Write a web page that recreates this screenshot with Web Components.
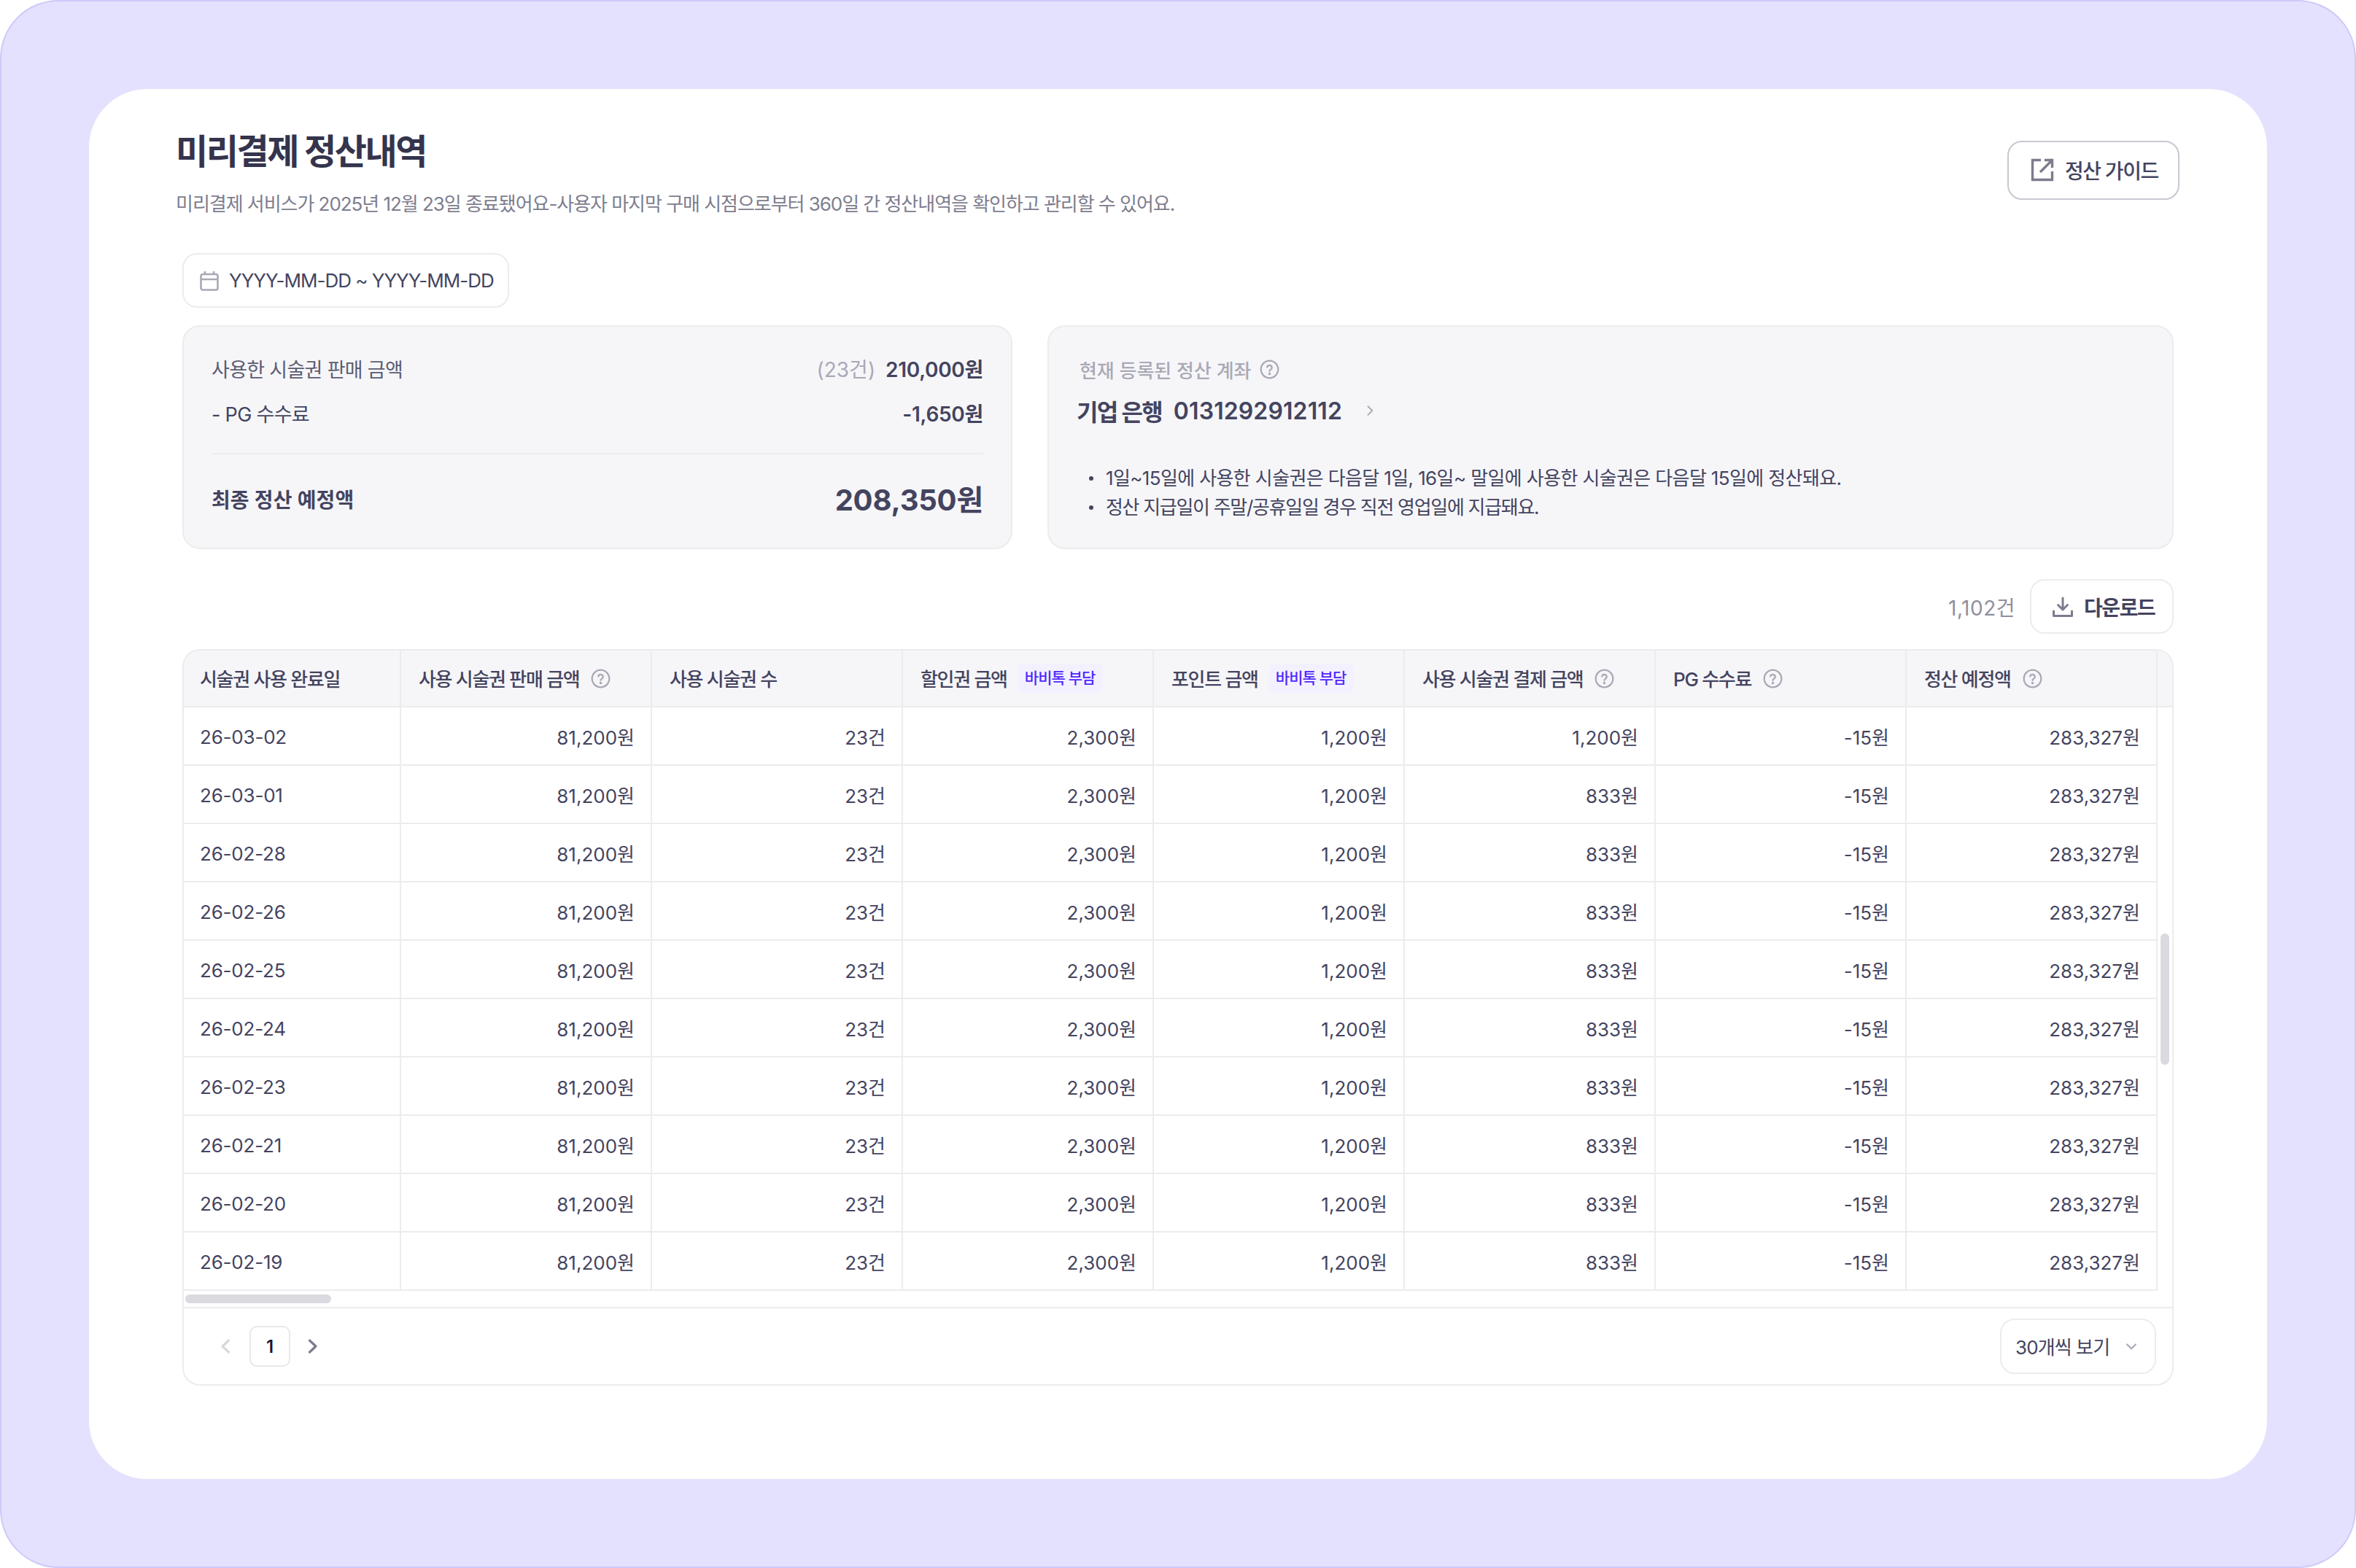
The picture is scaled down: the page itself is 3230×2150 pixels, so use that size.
<!doctype html>
<html lang="ko"><head><meta charset="utf-8"><title>미리결제 정산내역</title>
<style>
html,body{margin:0;padding:0;background:#fff}
body{width:3230px;height:2150px;overflow:hidden;font-family:Inter,"Noto Sans CJK KR","Noto Sans",sans-serif;color:#44445f}
</style></head><body>
<settlement-page>
  <page-head slot="head" title-text="미리결제 정산내역" desc="미리결제 서비스가 2025년 12월 23일 종료됐어요-사용자 마지막 구매 시점으로부터 360일 간 정산내역을 확인하고 관리할 수 있어요."></page-head>
  <date-range slot="date" value="YYYY-MM-DD ~ YYYY-MM-DD"></date-range>
  <sum-panel slot="sum"></sum-panel>
  <account-panel slot="account"></account-panel>
  <table-tools slot="tools" count="1,102건"></table-tools>
  <settle-table slot="table"></settle-table>
</settlement-page>
<script>
const ICON={
 help:(s=24,c='#a9a9b6')=>`<svg width="${s}" height="${s}" viewBox="0 0 24 24" fill="none" stroke="${c}" stroke-width="2" stroke-linecap="round" stroke-linejoin="round"><circle cx="12" cy="12" r="10.500"/><path d="M9 9.300a3 3 0 0 1 5.900.7c0 2-2.900 2.300-2.900 4.200"/><circle cx="12" cy="17.400" r=".6" fill="${c}"/></svg>`,
 chev:(dir,s,c,w)=>{const p={r:'M9 5l7 7-7 7',l:'M15 5l-7 7 7 7',d:'M5 9l7 7 7-7',pl:'M16.500 4L8 12l8.500 8',pr:'M7.500 4L16 12l-8.500 8'}[dir];return `<svg width="${s}" height="${s}" viewBox="0 0 24 24" fill="none" stroke="${c}" stroke-width="${w}" stroke-linecap="round" stroke-linejoin="round"><path d="${p}"/></svg>`}
};
function def(name,css,html,init){
 customElements.define(name,class extends HTMLElement{
  connectedCallback(){ if(this.shadowRoot)return; const r=this.attachShadow({mode:'open'}); r.innerHTML=`<style>${css}</style>`+(typeof html==='function'?html(this):html); if(init)init(this,r);}
 });
}
def('settlement-page',`
 :host{display:block;width:3230px;height:2150px;box-sizing:border-box;background:#e4e1fe;border:2px solid #cdc9f9;border-radius:80px;padding:120px}
 .card{box-sizing:border-box;width:100%;height:1906px;background:#fff;border-radius:80px;padding:50px 120px 0 122px}
 .date{margin-left:6px}
 .panels{display:grid;grid-template-columns:1138px 1544px;gap:48px;margin:24px 0 0 6px;height:307px}
 .tools{margin:41px 0 0 6px;width:2730px}
 .tbl{margin:21px 0 0 6px}
`,`<div class="card"><slot name="head"></slot>
 <div class="date"><slot name="date"></slot></div>
 <div class="panels"><slot name="sum"></slot><slot name="account"></slot></div>
 <div class="tools"><slot name="tools"></slot></div>
 <div class="tbl"><slot name="table"></slot></div></div>`);
def('page-head',`
 :host{display:flex;justify-content:space-between;align-items:flex-start;height:175px;margin-left:-3px}
 h1{margin:1px 0 0;font-size:48px;line-height:70px;font-weight:700;color:#35344d;letter-spacing:-2.400px}
 p{margin:19px 0 0;font-size:26px;line-height:36px;color:#7d7d8e;letter-spacing:-1.040px;font-weight:400}
 .btn{box-sizing:border-box;display:flex;align-items:center;gap:15px;width:236px;height:81px;margin:21px 0 0 0;padding:0 0 2px 30px;border:2px solid #c9c8d1;border-radius:20px;background:#fff;font-size:28px;font-weight:500;color:#44445f;letter-spacing:-1.400px}
`,h=>`<div><h1>${h.getAttribute('title-text')}</h1><p>${h.getAttribute('desc')}</p></div>
 <div class="btn"><svg width="32" height="32" viewBox="0 0 32 32" fill="none" stroke="#7c7c8d" stroke-width="3.400"><path d="M14 2.500H2.500v27h27V18" /><path d="M19 2.500h10.500V13M29 3L13 19"/></svg><span>정산 가이드</span></div>`);
def('date-range',`
 :host{display:inline-flex;box-sizing:border-box;align-items:center;gap:14px;height:75px;width:448px;padding-left:22px;border:2px solid #ececee;border-radius:20px;background:#fff;font-size:26px;color:#44445f;letter-spacing:-1px}
`,h=>`<svg width="26" height="28" viewBox="0 0 26 28" fill="none" stroke="#a9a9b6" stroke-width="2.600" stroke-linejoin="round"><rect x="1.500" y="5" width="23" height="21.500" rx="2.500"/><path d="M1.500 12h23M7 1v5M19 1v5"/></svg><span>${h.getAttribute('value')}</span>`);
def('sum-panel',`
 :host{display:block;box-sizing:border-box;height:307px;background:#f6f6f9;border:2px solid #ececee;border-radius:24px;padding:37px 38px 0}
 .r{display:flex;justify-content:space-between;align-items:center;height:40px;font-size:27px;letter-spacing:-.7px;color:#5c5c72}
 .r+.r{margin-top:21px}
 .r.pg{color:#44445f}
 .muted{color:#a9a9b6;margin-right:14px;font-size:28px;letter-spacing:0}
 b{font-weight:600;color:#44445f;font-size:28px;letter-spacing:-.3px}
 hr{border:0;height:2px;background:#ececee;margin:35px 0 0}
 .t{display:flex;justify-content:space-between;align-items:center;height:60px;margin-top:31px}
 .t span{font-size:28px;font-weight:600;color:#44445f;letter-spacing:.1px}
 .t strong{font-size:40px;font-weight:700;color:#44445f;letter-spacing:-.2px;margin-top:-3px}
`,`<div class="r"><span>사용한 시술권 판매 금액</span><span><span class="muted">(23건)</span><b>210,000원</b></span></div>
 <div class="r pg"><span>- PG 수수료</span><b>-1,650원</b></div><hr>
 <div class="t"><span>최종 정산 예정액</span><strong>208,350원</strong></div>`);
def('account-panel',`
 :host{display:block;box-sizing:border-box;height:307px;background:#f6f6f9;border:2px solid #ececee;border-radius:24px;padding:38px 42px 0}
 .l{display:flex;align-items:center;gap:12px;height:40px;font-size:26px;font-weight:500;color:#a9a9b6;letter-spacing:-.05px}
 .a{display:flex;align-items:center;height:50px;margin:12px 0 0 -4px;font-size:32px;font-weight:600;color:#44445f}
 .a span{letter-spacing:-1.800px}
 .a i{font-style:normal;margin-left:16px;letter-spacing:.1px}
 .a svg{margin-left:28px}
 ul{margin:47px 0 0;padding:0;list-style:none;font-size:26px;color:#44445f}
 li{height:41px;line-height:41px;display:flex;padding-left:13px;letter-spacing:-.62px}
 li+li{letter-spacing:-1.300px;margin-top:-1px}
 li::before{content:"";flex:none;width:6px;height:6px;border-radius:50%;background:#44445f;margin:18px 17px 0 0}
`,`<div class="l"><span>현재 등록된 정산 계좌</span>${ICON.help(27)}</div>
 <div class="a"><span>기업 은행</span><i>0131292912112</i>${ICON.chev('r',20,'#a9a9b6',2.400)}</div>
 <ul><li>1일~15일에 사용한 시술권은 다음달 1일, 16일~ 말일에 사용한 시술권은 다음달 15일에 정산돼요.</li><li>정산 지급일이 주말/공휴일일 경우 직전 영업일에 지급돼요.</li></ul>`);
def('table-tools',`
 :host{display:flex;justify-content:flex-end;align-items:center;gap:20px;height:75px}
 .c{font-size:28px;color:#8f8f9e;letter-spacing:.5px}
 .b{box-sizing:border-box;display:flex;align-items:center;gap:14px;width:197px;height:75px;padding-left:28px;border:2px solid #ececee;border-radius:20px;background:#fff;font-size:28px;font-weight:600;color:#44445f;letter-spacing:-1.400px}
`,h=>`<span class="c">${h.getAttribute('count')}</span><div class="b"><svg width="30" height="30" viewBox="0 0 30 30" fill="none" stroke="#7c7c8d" stroke-width="3" stroke-linecap="round" stroke-linejoin="round"><path d="M15 3v16M8.500 12.500L15 19l6.500-6.500M2.500 21v6.500h25V21"/></svg><span>다운로드</span></div>`);
const HEAD=[['시술권 사용 완료일'],['사용 시술권 판매 금액','h'],['사용 시술권 수'],['할인권 금액','b'],['포인트 금액','b'],['사용 시술권 결제 금액','h'],['PG 수수료','h'],['정산 예정액','h']];
const DATES=['26-03-02','26-03-01','26-02-28','26-02-26','26-02-25','26-02-24','26-02-23','26-02-21','26-02-20','26-02-19'];
def('settle-table',`
 :host{display:block;position:relative;box-sizing:border-box;width:2730px;height:1010px;border:2px solid #ececee;border-radius:24px;background:#fff;overflow:hidden}
 .scroll{height:878px;overflow:hidden}
 .g{display:grid;grid-template-columns:298px repeat(7,344px);grid-template-rows:78px repeat(10,80px);width:2706px}
 .g>div{box-sizing:border-box;display:flex;align-items:center;border-right:2px solid #ececee;border-bottom:2px solid #ececee;padding:0 22px;font-size:26px;color:#44445f}
 .g>.d{padding-top:3px;letter-spacing:-.2px}
 .g>.th{background:#f6f6f9;font-weight:500;letter-spacing:-1.300px;gap:16px;padding:0 24px 2px}
 .g>.th:first-child{padding-left:22px}
 .th svg{margin-top:2px}
 .g>.n{justify-content:flex-end}
 .headfill{position:absolute;top:0;right:0;width:20px;height:78px;box-sizing:border-box;background:#f6f6f9;border-bottom:2px solid #ececee}
 .tag{height:40px;line-height:40px;padding:0 10px;border-radius:8px;background:#f3f1ff;color:#5028ff;font-size:21px;font-weight:500;margin:2px 0 0 -2px;letter-spacing:-.9px}
 .hbar{position:relative;border-bottom:2px solid #ececee;box-sizing:border-box;height:24px}
 .hbar i{position:absolute;left:2px;top:5px;width:200px;height:12px;border-radius:6px;background:#dadae0}
 .vbar{position:absolute;right:4px;top:388px;width:12px;height:180px;border-radius:6px;background:#dadae0}
 .foot{display:flex;justify-content:space-between;align-items:center;height:104px;padding:0 22px 0 45px}
 .pg{display:flex;align-items:center}
 .pg .num{box-sizing:border-box;width:56px;height:56px;margin:0 19px 0 21px;border:2px solid #e8e8ec;border-radius:10px;display:flex;align-items:center;justify-content:center;font-size:24px;font-weight:600;color:#1a1838}
 .sel{box-sizing:border-box;display:flex;align-items:center;width:214px;height:76px;padding:0 0 1px 19px;border:2px solid #ececee;border-radius:20px;font-size:26px;color:#44445f;letter-spacing:-.9px}
 .sel svg{margin:1px 0 0 20px}
`,()=>{
 const th=HEAD.map(([t,k])=>`<div class="th"><span>${t}</span>${k==='h'?ICON.help(27):k==='b'?'<span class="tag">바비톡 부담</span>':''}</div>`).join('');
 const rows=DATES.map((d,i)=>`<div class="d">${d}</div><div class="n">81,200원</div><div class="n">23건</div><div class="n">2,300원</div><div class="n">1,200원</div><div class="n">${i?'833원':'1,200원'}</div><div class="n">-15원</div><div class="n">283,327원</div>`).join('');
 return `<div class="scroll"><div class="g">${th}${rows}</div></div><div class="headfill"></div><div class="vbar"></div>
 <div class="hbar"><i></i></div>
 <div class="foot"><div class="pg">${ICON.chev('pl',24,'#d8d8de',3.200)}<div class="num">1</div>${ICON.chev('pr',24,'#7c7c8d',3.200)}</div>
 <div class="sel"><span>30개씩 보기</span>${ICON.chev('d',20,'#a9a9b6',2.600)}</div></div>`;
});
</script>
</body></html>
